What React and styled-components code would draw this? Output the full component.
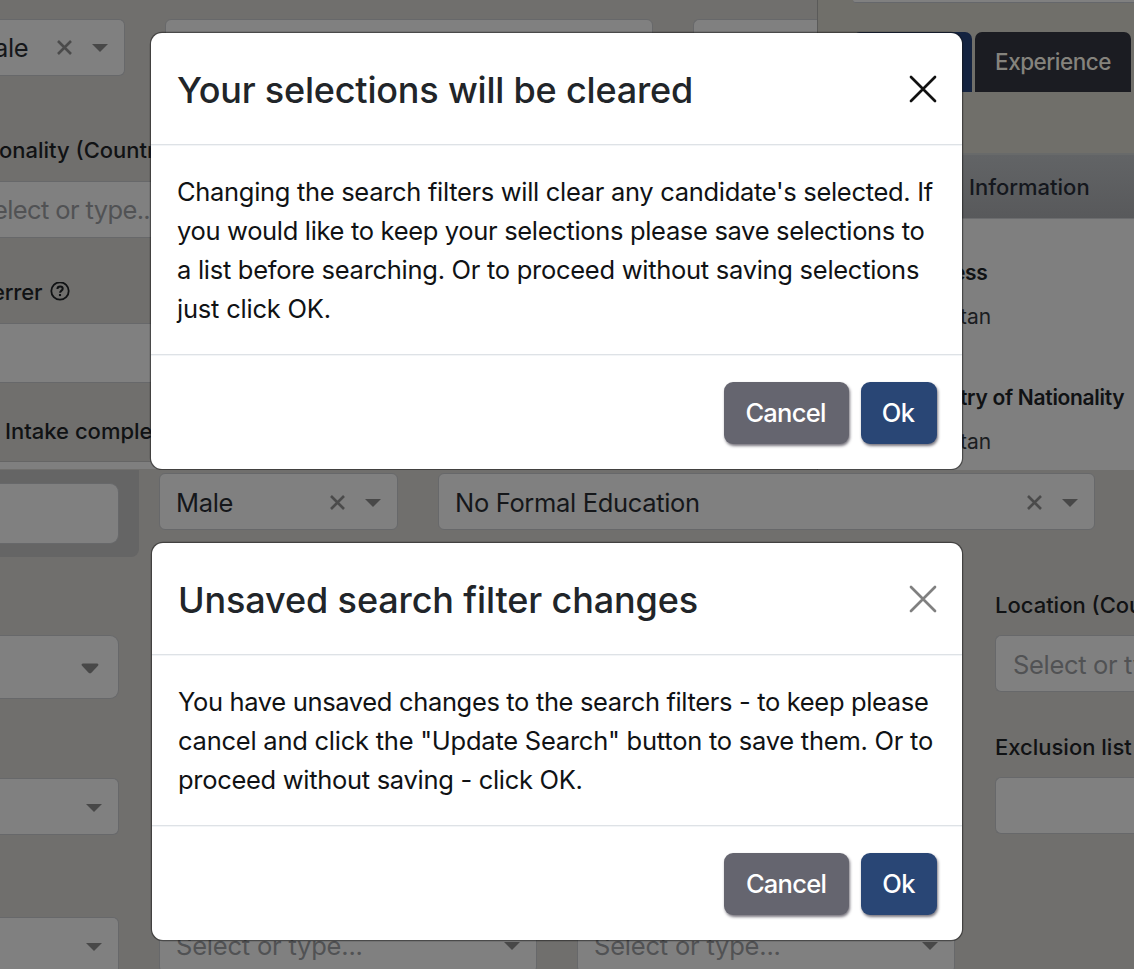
import React from "react";
import styled, { createGlobalStyle } from "styled-components";

const Global = createGlobalStyle`
  *, *::before, *::after { box-sizing: border-box; }
  body { margin: 0; background: #706f6d; font-family: Inter, "Liberation Sans", sans-serif; color: #101214; }
`;

const Page = styled.main`
  width: 1134px;
  height: 969px;
  overflow: hidden;
  display: flex;
  flex-direction: column;
`;

const Scene = styled.section`
  position: relative;
  display: flex;
  flex: none;
  height: ${(p) => p.$height}px;
  overflow: hidden;
`;

const Text = styled.span`
  white-space: nowrap;
  letter-spacing: ${(p) => p.$track || 0}px;
`;

/* ---------- form fields ---------- */

const FieldBox = styled.div`
  display: flex;
  align-items: center;
  flex: none;
  width: ${(p) => (p.$width ? `${p.$width}px` : "100%")};
  height: ${(p) => p.$height || 57}px;
  padding: ${(p) => p.$padTop ?? 2}px ${(p) => p.$padRight ?? 16}px 0 16px;
  gap: 20px;
  background: #808080;
  border: 1px solid #67686a;
  border-radius: ${(p) => p.$radius ?? 6}px;
  font-size: 25.5px;
  line-height: 32px;
  color: ${(p) => (p.$muted ? "#515254" : "#15171a")};
  ${(p) => p.$cut && "border-left: 0; border-top-left-radius: 0; border-bottom-left-radius: 0;"}
  ${(p) => p.$open && "border-right: 0; border-top-right-radius: 0; border-bottom-right-radius: 0;"}
`;

const Value = styled(Text)`
  flex: 1;
  min-width: 0;
  margin-left: ${(p) => p.$shift || 0}px;
`;

const Icon = styled.svg`
  display: block;
  flex: none;
`;

const ClearIcon = () => (
  <Icon width="15" height="15" viewBox="0 0 15 15" fill="none" stroke="#4b4b4b" strokeWidth="2.6">
    <path d="M1 1l13 13M14 1L1 14" />
  </Icon>
);

const Caret = () => (
  <Icon width="16" height="8" viewBox="0 0 16 8" fill="#484848">
    <path d="M0 0h16L8 8z" />
  </Icon>
);

const RoundCaret = () => (
  <Icon width="18" height="11" viewBox="0 0 18 11" fill="#484848">
    <path d="M2 .5h14c1.3 0 1.9 1.3 1 2.200L10.4 9.700c-.8.8-2 .8-2.800 0L1 2.700C.1 1.800.7.5 2 .5z" />
  </Icon>
);

const HelpIcon = () => (
  <Icon width="20" height="20" viewBox="0 0 20 20" fill="none" stroke="#101214">
    <circle cx="10" cy="9" r="8.700" strokeWidth="1.800" />
    <path d="M7.400 7c.1-1.700 1.200-2.500 2.700-2.500 1.500 0 2.600.9 2.600 2.200 0 1.900-2.600 1.900-2.600 4" strokeWidth="2" />
    <path d="M10 12v2.100" strokeWidth="2.100" />
  </Icon>
);

const Select = ({ children, shift, track = -0.33, clear, caret = true, ...box }) => (
  <FieldBox {...box}>
    <Value $shift={shift} $track={track}>{children}</Value>
    {clear && <ClearIcon />}
    {caret && <Caret />}
  </FieldBox>
);

const Label = styled.div`
  display: flex;
  align-items: center;
  gap: 8px;
  height: 30px;
  font-size: 22px;
  font-weight: 500;
  line-height: 30px;
  margin-left: ${(p) => p.$shift || 0}px;
  margin-top: ${(p) => p.$top || 0}px;
`;

/* ---------- upper page ---------- */

const FilterPane = styled.div`
  display: flex;
  flex-direction: column;
  width: 818px;
  padding-top: 19px;
  overflow: hidden;
  background: #706f6d;
  border-right: 1px solid #5a5a59;
`;

const FieldRow = styled.div`
  display: flex;
  gap: ${(p) => p.$gap || 40}px;
`;

const LabeledField = styled.div`
  display: flex;
  flex-direction: column;
  gap: ${(p) => p.$gap}px;
`;

const BottomStrip = styled.div`
  flex: none;
  height: 8px;
  margin-top: 15px;
  background: #7f7f7f;
  border-top: 1px solid #656565;
`;

const DetailPane = styled.div`
  display: flex;
  flex: 1;
  flex-direction: column;
  min-width: 0;
  background: #706f6a;
`;

const SearchEdge = styled.div`
  flex: none;
  height: 3px;
  margin-left: 35px;
  background: #808080;
  border-bottom: 1px solid #65676b;
  border-bottom-left-radius: 5px;
`;

const Tabs = styled.div`
  display: flex;
  flex: none;
  gap: 3px;
  height: 60px;
  margin: 29px 0 61px 35px;
`;

const Tab = styled.div`
  display: flex;
  align-items: center;
  justify-content: center;
  flex: none;
  width: ${(p) => p.$width}px;
  padding-bottom: 1px;
  background: ${(p) => (p.$active ? "#142340" : "#1b1c22")};
  color: #85837d;
  border-radius: 7px 7px 0 0;
  font-size: 22.500px;
  font-weight: 500;
`;

const SectionBar = styled.div`
  display: flex;
  align-items: center;
  flex: none;
  height: 66px;
  padding: 0 0 0 151px;
  border-top: 2px solid #686a6a;
  border-bottom: 1px solid #6b6c6e;
  background: linear-gradient(#626466, #58595b);
  font-size: 22px;
  font-weight: 500;
  color: #14171d;
`;

const Details = styled.div`
  flex: 1;
  padding: 39px 0 0 142px;
  background: #7f7f7f;
`;

const DetailName = styled.div`
  height: 30px;
  margin-left: ${(p) => p.$shift || 0}px;
  font-size: 21px;
  font-weight: 600;
  line-height: 30px;
`;

const DetailValue = styled.div`
  height: 30px;
  margin: 14px 0 51px;
  font-size: 21px;
  line-height: 30px;
  color: #1b1d1f;
`;

/* ---------- lower page ---------- */

const SideColumn = styled.div`
  display: flex;
  flex: none;
  flex-direction: column;
  width: 139px;
`;

const SearchPanel = styled.div`
  flex: none;
  height: 87px;
  padding-top: 13px;
  background: #656565;
  border-bottom-right-radius: 8px;
`;

const SideFields = styled.div`
  display: flex;
  flex-direction: column;
  padding-top: 78px;
`;

const Spacer = styled.div`
  flex: none;
  height: ${(p) => p.$size}px;
`;

const FormArea = styled.div`
  display: flex;
  flex: 1;
  flex-direction: column;
  min-width: 0;
  padding: 3px 0 0 20px;
`;

const FormGrid = styled.div`
  display: grid;
  grid-template-columns: 378px 378px 139px;
  grid-template-rows: 142px 142px 100px;
  column-gap: 40px;
  padding-top: 60px;
`;

const Cell = styled.div`
  display: flex;
  flex-direction: column;
  grid-column: ${(p) => p.$col};
  grid-row: ${(p) => p.$row};
  gap: 15px;
  ${(p) => p.$end && "padding-top: 42px;"}
`;

/* ---------- dialogs ---------- */

const Dialog = styled.div`
  position: absolute;
  left: ${(p) => p.$left}px;
  top: ${(p) => p.$top}px;
  display: flex;
  flex-direction: column;
  width: ${(p) => p.$width}px;
  height: ${(p) => p.$height}px;
  background: #fff;
  border-radius: 11px;
  box-shadow: 0 0 0 1.2px rgba(20, 20, 20, 0.5);
`;

const DialogHeader = styled.header`
  display: flex;
  align-items: center;
  justify-content: space-between;
  flex: none;
  height: 112px;
  padding: 1px 25px 0 26px;
  border-bottom: 1px solid #dee2e6;
  box-shadow: 0 1px #f3f5f7;
`;

const Title = styled.h2`
  margin: 2px 0 0;
  font-size: 36px;
  font-weight: 500;
  line-height: 48px;
  white-space: nowrap;
  letter-spacing: ${(p) => p.$track}px;
  color: #212529;
`;

const DialogBody = styled.div`
  display: flex;
  flex: 1;
  flex-direction: column;
  padding: 27px 0 0 26px;
  font-size: 25.500px;
  line-height: 39px;
`;

const DialogFooter = styled.footer`
  display: flex;
  align-items: center;
  justify-content: flex-end;
  flex: none;
  gap: 12px;
  height: 115px;
  padding: 1px 25px 0 0;
  border-top: 1px solid #dee2e6;
  box-shadow: inset 0 1px #f3f5f7;
`;

const Button = styled.button`
  width: ${(p) => p.$width}px;
  height: 62px;
  padding: 0 1px 0 0;
  border: 0;
  border-radius: 9px;
  background: ${(p) => (p.$primary ? "#294675" : "#65656f")};
  box-shadow: 1px 2px 3px rgba(30, 25, 40, 0.6);
  color: #fff;
  font-family: inherit;
  font-size: 25.500px;
  font-weight: 500;
  letter-spacing: -0.75px;
`;

const CloseIcon = ({ color }) => (
  <Icon width="28" height="28" viewBox="0 0 28 28" fill="none" stroke={color} strokeWidth="2.700" strokeLinecap="round">
    <path d="M2 2l24 24M26 2L2 26" />
  </Icon>
);

const Confirm = ({ title, titleTrack, lines, closeColor, ...place }) => (
  <Dialog role="dialog" {...place}>
    <DialogHeader>
      <Title $track={titleTrack}>{title}</Title>
      <CloseIcon color={closeColor} />
    </DialogHeader>
    <DialogBody>
      {lines.map(([text, track]) => (
        <Text key={text} $track={track}>{text}</Text>
      ))}
    </DialogBody>
    <DialogFooter>
      <Button $width={125}>Cancel</Button>
      <Button $width={76} $primary>Ok</Button>
    </DialogFooter>
  </Dialog>
);

const CLEARED = [
  ["Changing the search filters will clear any candidate's selected. If", -0.31],
  ["you would like to keep your selections please save selections to", -0.33],
  ["a list before searching. Or to proceed without saving selections", -0.28],
  ["just click OK.", -0.22],
];

const UNSAVED = [
  ["You have unsaved changes to the search filters - to keep please", -0.345],
  ['cancel and click the "Update Search" button to save them. Or to', -0.24],
  ["proceed without saving - click OK.", -0.3],
];

export default function App() {
  return (
    <Page>
      <Global />
      <Scene $height={470}>
        <FilterPane>
          <FieldRow>
            <Select $width={125} $cut $padTop={0} clear shift={-22}>ale</Select>
            <Select $width={488} caret={false} />
            <Select $width={124} $open caret={false} />
          </FieldRow>
          <LabeledField $gap={16}>
            <Label $top={59} $shift={-1}><Text>onality (Country)</Text></Label>
            <Select $width={400} $cut $padTop={0} shift={-23} track={-0.62} $muted caret={false}>elect or type...</Select>
          </LabeledField>
          <LabeledField $gap={16}>
            <Label $top={39} $shift={-8}><Text $track={-0.2}>errer</Text><HelpIcon /></Label>
            <Select $width={400} $cut $height={60} caret={false} />
          </LabeledField>
          <Label $top={33} $shift={5}><Text>Intake completed</Text></Label>
          <BottomStrip />
        </FilterPane>
        <DetailPane>
          <SearchEdge />
          <Tabs>
            <Tab $width={119} $active />
            <Tab $width={156}><Text $track={-0.5}>Experience</Text></Tab>
          </Tabs>
          <SectionBar><Text>Information</Text></SectionBar>
          <Details>
            <DetailName $shift={-7}><Text $track={-0.3}>ess</Text></DetailName>
            <DetailValue><Text>tan</Text></DetailValue>
            <DetailName><Text $track={-0.3}>try of Nationality</Text></DetailName>
            <DetailValue><Text>tan</Text></DetailValue>
          </Details>
        </DetailPane>
        <Confirm
          $left={151}
          $top={33}
          $width={810.5}
          $height={436}
          title="Your selections will be cleared"
          titleTrack={-0.2}
          lines={CLEARED}
          closeColor="#111"
        />
      </Scene>

      <Scene $height={499}>
        <SideColumn>
          <SearchPanel>
            <FieldBox $width={119} $height={61} $radius={9} $cut />
          </SearchPanel>
          <SideFields>
            <FieldBox $width={119} $height={64} $radius={9} $cut $padRight={19}>
              <Value />
              <RoundCaret />
            </FieldBox>
            <Spacer $size={79} />
            <Select $width={119} $cut />
            <Spacer $size={82} />
            <Select $width={119} $cut />
          </SideFields>
        </SideColumn>
        <FormArea>
          <FieldRow>
            <Select $width={239} clear>Male</Select>
            <Select $width={657} clear>No Formal Education</Select>
          </FieldRow>
          <FormGrid>
            <Cell $col={3} $row={1}>
              <Label><Text>Location (Country)</Text></Label>
              <Select $open $muted shift={1} caret={false}>Select or type...</Select>
            </Cell>
            <Cell $col={3} $row={2}>
              <Label><Text>Exclusion list</Text></Label>
              <Select $open caret={false} />
            </Cell>
            <Cell $col={1} $row={3} $end><Select $muted track={-0.2}>Select or type...</Select></Cell>
            <Cell $col={2} $row={3} $end><Select $muted track={-0.2}>Select or type...</Select></Cell>
          </FormGrid>
        </FormArea>
        <Confirm
          $left={152}
          $top={73}
          $width={810}
          $height={397}
          title="Unsaved search filter changes"
          titleTrack={-0.12}
          lines={UNSAVED}
          closeColor="#808080"
        />
      </Scene>
    </Page>
  );
}
